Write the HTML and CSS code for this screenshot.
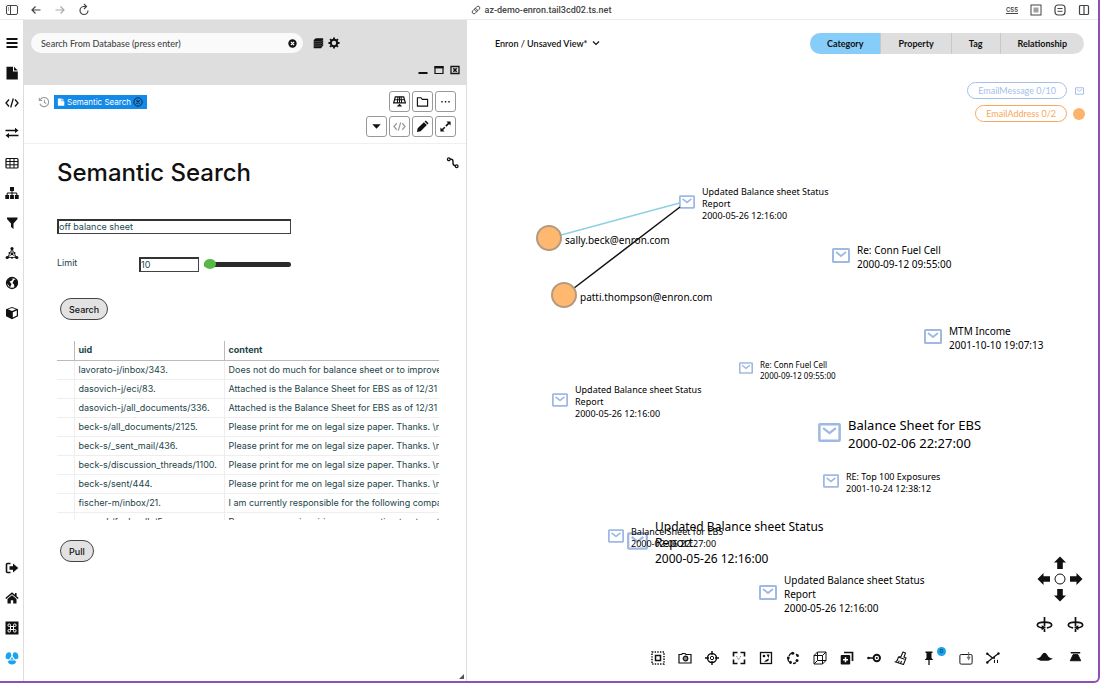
FILE: index.html
```html
<!DOCTYPE html>
<html lang="en">
<head>
    <meta charset="UTF-8">
    <meta name="viewport" content="width=device-width, initial-scale=1.0">
    <title>Semantic Search</title>
    <link rel="stylesheet" href="styles.css">
</head>
<body>

<!-- shared icons -->
<svg class="sprite" aria-hidden="true">
    <symbol id="mail" viewBox="0 0 18 15">
        <rect x="1" y="1" width="16" height="13" rx="0.5" fill="#fff" stroke="currentColor" stroke-width="2"/>
        <path d="M4 4l5 4 5-4" fill="none" stroke="currentColor" stroke-width="1.800"/>
    </symbol>
    <symbol id="code" viewBox="0 0 14 14">
        <path d="M4 3.500L1 7l3 3.500M10 3.500L13 7l-3 3.500M8.300 2.500L5.700 11.500" fill="none" stroke="currentColor" stroke-width="1.300"/>
    </symbol>
    <symbol id="file" viewBox="0 0 14 14">
        <path d="M1.500.8h6.500v4.700h4.800V13.500H1.500z" fill="currentColor"/>
        <path d="M9 .8l3.800 3.700H9z" fill="currentColor"/>
    </symbol>
    <symbol id="arrow" viewBox="0 0 14 14">
        <path d="M7 .5L13 6.500H9.800V13H4.200V6.500H1z" fill="currentColor"/>
    </symbol>
    <symbol id="rotate" viewBox="0 0 18 18">
        <path d="M9 1v10M9 13.500v3.500" stroke="currentColor" stroke-width="1.800"/>
        <path d="M6.500 12.500C-.8 11.800-.5 6.500 9 6.500s9.800 5.300 2.500 6" fill="none" stroke="currentColor" stroke-width="1.800"/>
        <path d="M6 9.700l4.500 2.600-4.500 2.700z" fill="currentColor"/>
    </symbol>
</svg>

<header class="browser-bar">
    <div class="bar-group">
        <button class="bar-btn" aria-label="Sidebar"><svg viewBox="0 0 14 14"><rect x="1.500" y="2.500" width="11" height="9" rx="1.500" fill="none" stroke="currentColor"/><path d="M5.500 2.500v9M3 5h1M3 7h1" stroke="currentColor"/></svg></button>
        <button class="bar-btn" aria-label="Back"><svg viewBox="0 0 14 14"><path d="M11.500 7H3M6.500 3.500L3 7l3.500 3.500" fill="none" stroke="currentColor" stroke-width="1.200"/></svg></button>
        <button class="bar-btn faded" aria-label="Forward"><svg viewBox="0 0 14 14"><path d="M2.500 7H11M7.500 3.500L11 7l-3.500 3.500" fill="none" stroke="currentColor" stroke-width="1.200"/></svg></button>
        <button class="bar-btn" aria-label="Reload"><svg viewBox="0 0 14 14"><path d="M11 7.500a4 4 0 1 1-4-4h2M7 1l2.500 2.500L7 6" fill="none" stroke="currentColor" stroke-width="1.200"/></svg></button>
    </div>
    <div class="url">
        <svg viewBox="0 0 14 14"><g fill="none" stroke="currentColor" stroke-width="1.200" transform="rotate(-45 7 7)"><rect x="0.500" y="4.500" width="8" height="5" rx="2.500"/><rect x="5.500" y="4.500" width="8" height="5" rx="2.500"/></g></svg>
        az-demo-enron.tail3cd02.ts.net
    </div>
    <div class="bar-group bar-right">
        <button class="bar-btn css-btn">CSS</button>
        <button class="bar-btn" aria-label="Reader"><svg viewBox="0 0 14 14"><rect x="2" y="2" width="10" height="10" fill="none" stroke="currentColor"/><rect x="4.500" y="4.500" width="5" height="5" fill="currentColor" opacity=".5"/></svg></button>
        <button class="bar-btn" aria-label="Page menu"><svg viewBox="0 0 14 14"><rect x="2" y="2" width="10" height="10" rx="3" fill="none" stroke="currentColor" stroke-width="1.200"/><path d="M4.500 5.500h5M4.500 8.300h5" stroke="currentColor"/></svg></button>
        <button class="bar-btn" aria-label="Split view"><svg viewBox="0 0 14 14"><rect x="2.500" y="2.500" width="9" height="9" rx="1" fill="none" stroke="currentColor" stroke-width="1.200"/><path d="M7 2v10" stroke="currentColor" stroke-width="1.200"/></svg></button>
    </div>
</header>

<div class="app">
    <nav class="rail">
        <button aria-label="Menu"><svg viewBox="0 0 14 14"><path d="M1.500 3h11M1.500 7h11M1.500 11h11" stroke="currentColor" stroke-width="2"/></svg></button>
        <button aria-label="Document"><svg><use href="#file"/></svg></button>
        <button aria-label="Code"><svg><use href="#code"/></svg></button>
        <button aria-label="Exchange"><svg viewBox="0 0 14 14"><path d="M.5 4.500H11M3 9.500h10.500" stroke="currentColor" stroke-width="1.600"/><path d="M10 1.800L13.500 4.500 10 7zM4 7L.5 9.500 4 12.200z" fill="currentColor"/></svg></button>
        <button aria-label="Table"><svg viewBox="0 0 14 14"><rect x="1" y="2.500" width="12" height="9.500" rx="1" fill="none" stroke="currentColor" stroke-width="1.200"/><path d="M1 5.500h12M1 8.800h12M5 2.500V12M9 2.500V12" stroke="currentColor"/></svg></button>
        <button aria-label="Hierarchy"><svg viewBox="0 0 14 14"><path d="M5 1h4v4H5zM.3 9h3.800v4H.3zM5.100 9h3.800v4H5.100zM9.900 9h3.800v4H9.900z" fill="currentColor"/><path d="M7 4v5M2.200 9V7h9.600v2" fill="none" stroke="currentColor"/></svg></button>
        <button aria-label="Filter"><svg viewBox="0 0 14 14"><path d="M2 1.500h10.500v1.500L8.500 7.500V13L6 11V7.500L2 3z" fill="currentColor"/></svg></button>
        <button aria-label="Network"><svg viewBox="0 0 14 14"><path d="M7 3L2.500 11.500h9zM7 3v5l-4.500 3.500M7 8l4.500 3.500" fill="none" stroke="currentColor" stroke-width=".8"/><g fill="currentColor"><circle cx="7" cy="2.500" r="1.600"/><circle cx="2.200" cy="11.500" r="1.600"/><circle cx="11.800" cy="11.500" r="1.600"/><circle cx="7" cy="8" r="1.200"/><circle cx="7" cy="11.800" r="1"/><circle cx="4.500" cy="7" r="1"/><circle cx="9.500" cy="7" r="1"/></g></svg></button>
        <button aria-label="Globe"><svg viewBox="0 0 14 14"><circle cx="7" cy="7" r="5.500" fill="#fff" stroke="currentColor" stroke-width="1.300"/><path d="M2 4.500L5 2l3 .5-1 2-2.500 1L6.500 8 5 11.500 3.500 9 1.500 7zM9 4l3-1 1 4-1.500 3.500L9.500 12l-.5-3.500L7.500 7z" fill="currentColor"/></svg></button>
        <button aria-label="Cube"><svg viewBox="0 0 14 14"><path d="M7 1l6 2.200v7L7 13.200l-6-3v-7z" fill="currentColor"/><path d="M7.800 6.300l4-1.700v5l-4 2zM3 3.300l4-1.200 4 1.200L7 5z" fill="#fff"/></svg></button>
        <div class="rail-space"></div>
        <button aria-label="Sign out"><svg viewBox="0 0 14 14"><path d="M5.500 2.500H2.500a1 1 0 0 0-1 1v7a1 1 0 0 0 1 1h3" fill="none" stroke="currentColor" stroke-width="1.600"/><path d="M4.500 5.300H8V2.500L13.300 7 8 11.500V8.700H4.500z" fill="currentColor"/></svg></button>
        <button aria-label="Home"><svg viewBox="0 0 14 14"><path d="M.8 7.500L7 2.200l6.200 5.300M10.800 2v3.500" fill="none" stroke="currentColor" stroke-width="1.600"/><path d="M2.500 8L7 4.300 11.500 8v4.500h-3.300V9.200H5.800v3.300H2.500z" fill="currentColor"/></svg></button>
        <button aria-label="Commands"><svg viewBox="0 0 14 14"><path d="M.5.500h13v13H.5z" fill="currentColor"/><path d="M5.500 5.500h3v3h-3zM5.500 5.500H4.300a1.300 1.300 0 1 1 1.200-1.200zM8.500 5.500V4.300a1.300 1.300 0 1 1 1.200 1.200zM8.500 8.500h1.200a1.300 1.300 0 1 1-1.200 1.200zM5.500 8.500v1.200a1.300 1.300 0 1 1-1.200-1.200z" fill="none" stroke="#fff"/></svg></button>
        <button class="brand" aria-label="About"><svg viewBox="0 0 14 14"><g fill="currentColor"><path d="M1.500 2.500Q4 .5 5.800 2L6.500 5 4 8.500.8 7.500Q0 5 1.500 2.500z"/><path d="M12.500 2.500Q10 .5 8.200 2L7.500 5 10 8.500l3.200-1Q14 5 12.500 2.500z"/><path d="M2.800 10.800L4.800 9h4.400l2 1.800q-1 2.700-4.200 2.700t-4.200-2.700z"/></g><path d="M7 5.200L4.800 9h4.400z" fill="currentColor" stroke="#fff" stroke-width=".8"/></svg></button>
    </nav>

    <main class="panel">
        <div class="panel-head">
            <div class="search-row">
                <div class="search-box">
                    <input type="text" aria-label="Search from database" placeholder="Search From Database (press enter)">
                    <button aria-label="Clear"><svg viewBox="0 0 14 14"><circle cx="7" cy="7" r="6.500" fill="currentColor"/><path d="M4.500 4.500l5 5M9.500 4.500l-5 5" stroke="#fff" stroke-width="2"/></svg></button>
                </div>
                <button aria-label="Database"><svg viewBox="0 0 14 14"><path d="M2 3.500L4.500 1.500H13V10l-2.500 3H2z" fill="currentColor"/><path d="M2 5.500h8.500L13 3.500M2 8h8.500L13 6M2 10.500h8.500L13 8.500" fill="none" stroke="#888" stroke-width=".6"/></svg></button>
                <button aria-label="Settings"><svg viewBox="0 0 14 14"><circle cx="7" cy="7" r="3.700" fill="none" stroke="currentColor" stroke-width="2.300"/><path d="M7 .5v2.500M7 11v2.500M.5 7H3M11 7h2.500M2.400 2.400l1.800 1.800M9.800 9.800l1.800 1.800M2.400 11.600l1.800-1.800M9.800 4.200l1.800-1.800" stroke="currentColor" stroke-width="2.200"/></svg></button>
            </div>
            <div class="window-row">
                <button aria-label="Minimize"><svg viewBox="0 0 10 10"><path d="M.5 8h9" stroke="currentColor" stroke-width="2"/></svg></button>
                <button aria-label="Maximize"><svg viewBox="0 0 10 10"><path d="M1 1.500h8v7H1z" fill="none" stroke="currentColor" stroke-width="1.200"/><path d="M.5 2.300h9" stroke="currentColor" stroke-width="2.200"/></svg></button>
                <button aria-label="Close"><svg viewBox="0 0 10 10"><path d="M1 1.500h8v7H1z" fill="none" stroke="currentColor" stroke-width="1.300"/><path d="M3.300 3.300l3.400 3.400M6.700 3.300L3.300 6.700" stroke="currentColor" stroke-width="1.500"/></svg></button>
            </div>
        </div>

        <div class="panel-tools">
            <div class="tabs">
                <button class="history" aria-label="History"><svg viewBox="0 0 14 14"><path d="M2.500 4.500a5.300 5.300 0 1 1-.3 4.500M1.500 2v3.200h3.300M7.500 4.500V7.500l2 1.300" fill="none" stroke="currentColor" stroke-width="1.200"/></svg></button>
                <div class="tab">
                    <svg><use href="#file"/></svg>
                    <span>Semantic Search</span>
                    <button aria-label="Close tab"><svg viewBox="0 0 14 14"><circle cx="7" cy="7" r="5.800" fill="none" stroke="currentColor" stroke-width="1.300"/><path d="M4.800 4.800l4.400 4.400M9.200 4.800L4.800 9.200" stroke="currentColor" stroke-width="1.600"/></svg></button>
                </div>
            </div>
            <div class="tool-grid">
                <span></span>
                <button aria-label="Grid"><svg viewBox="0 0 14 14"><path d="M2.500 2h9l1.800 6.500H.7z" fill="none" stroke="currentColor" stroke-width="1.300"/><path d="M1.500 5.200h11M5.300 2L4.700 8.500M8.700 2l.6 6.500M7 2v6.500" stroke="currentColor" stroke-width="1.100"/><path d="M7 9.500l3 3H4z" fill="currentColor"/></svg></button>
                <button aria-label="Folder"><svg viewBox="0 0 14 14"><path d="M1.500 3h4l1.300 1.700h5.700V12h-11z" fill="none" stroke="currentColor" stroke-width="1.200" stroke-linejoin="round"/></svg></button>
                <button aria-label="More"><svg viewBox="0 0 14 14"><path d="M2.500 6.500H4V8H2.500zM6.300 6.500h1.500V8H6.300zM10 6.500h1.500V8H10z" fill="currentColor"/></svg></button>
                <button aria-label="Dropdown"><svg viewBox="0 0 14 14"><path d="M2.500 4.500h9L7 9.500z" fill="currentColor"/></svg></button>
                <button class="off" aria-label="Edit code"><svg><use href="#code"/></svg></button>
                <button aria-label="Edit"><svg viewBox="0 0 14 14"><path d="M1 13l.8-4L8.500 2.300l3.200 3.200L5 12.200zM9.200 1.600L10.500.5l3 3-1.100 1.300z" fill="currentColor"/></svg></button>
                <button aria-label="Expand"><svg viewBox="0 0 14 14"><path d="M3 11l8-8" stroke="currentColor" stroke-width="1.700" stroke-dasharray="4.600 1.600"/><path d="M8 1.500h4.500V6zM1.500 8v4.500H6z" fill="currentColor"/></svg></button>
            </div>
        </div>

        <div class="panel-body">
            <button class="route" aria-label="Route"><svg viewBox="0 0 14 14"><path d="M3.500 3.500h2q2 0 2 2v2q0 3 3 3h1" fill="none" stroke="currentColor" stroke-width="1.500"/><circle cx="3" cy="3.500" r="1.500" fill="#fff" stroke="currentColor" stroke-width="1.300"/><circle cx="11.500" cy="11" r="1.500" fill="#fff" stroke="currentColor" stroke-width="1.300"/></svg></button>
            <h1>Semantic Search</h1>
            <form class="query">
                <input class="field" type="text" aria-label="Query" value="off balance sheet">
                <div class="limit">
                    <label for="limit">Limit</label>
                    <input class="field" id="limit" type="text" value="10">
                    <input type="range" aria-label="Limit slider" min="0" max="200" value="1">
                </div>
                <button class="pill-btn" type="button">Search</button>
            </form>
            <div class="results">
                <table>
                    <thead>
                        <tr><th></th><th>uid</th><th>content</th></tr>
                    </thead>
                    <tbody>
                        <tr><td></td><td>lavorato-j/inbox/343.</td><td>Does not do much for balance sheet or to improve</td></tr>
                        <tr><td></td><td>dasovich-j/eci/83.</td><td>Attached is the Balance Sheet for EBS as of 12/31</td></tr>
                        <tr><td></td><td>dasovich-j/all_documents/336.</td><td>Attached is the Balance Sheet for EBS as of 12/31</td></tr>
                        <tr><td></td><td>beck-s/all_documents/2125.</td><td>Please print for me on legal size paper. Thanks. \n-</td></tr>
                        <tr><td></td><td>beck-s/_sent_mail/436.</td><td>Please print for me on legal size paper. Thanks. \n-</td></tr>
                        <tr><td></td><td>beck-s/discussion_threads/1100.</td><td>Please print for me on legal size paper. Thanks. \n-</td></tr>
                        <tr><td></td><td>beck-s/sent/444.</td><td>Please print for me on legal size paper. Thanks. \n-</td></tr>
                        <tr><td></td><td>fischer-m/inbox/21.</td><td>I am currently responsible for the following compa</td></tr>
                        <tr><td></td><td>mann-k/fuel_cells/5.</td><td>Response re my inquiries re accounting treatment</td></tr>
                    </tbody>
                </table>
            </div>
            <button class="pill-btn" type="button">Pull</button>
        </div>
        <div class="resize"></div>
    </main>

    <section class="graph">
        <div class="graph-head">
            <button class="view-name">Enron / Unsaved View* <svg viewBox="0 0 10 10"><path d="M2 3.500l3 3 3-3" fill="none" stroke="currentColor" stroke-width="1.200"/></svg></button>
            <div class="segments">
                <button class="active">Category</button>
                <button>Property</button>
                <button>Tag</button>
                <button>Relationship</button>
            </div>
        </div>

        <div class="legend">
            <div class="legend-row message"><button>EmailMessage 0/10</button><svg><use href="#mail"/></svg></div>
            <div class="legend-row address"><button>EmailAddress 0/2</button><span class="dot"></span></div>
        </div>

        <svg class="edges" aria-hidden="true">
            <line x1="83" y1="218" x2="220" y2="181" stroke="#8ed0e4" stroke-width="1.500"/>
        </svg>
        <div class="node mail-node size-s n1"><svg><use href="#mail"/></svg><p>Updated Balance sheet Status<br>Report<br>2000-05-26 12:16:00</p></div>
        <div class="node mail-node size-m n2"><svg><use href="#mail"/></svg><p>Re: Conn Fuel Cell<br>2000-09-12 09:55:00</p></div>
        <div class="node mail-node size-m n3"><svg><use href="#mail"/></svg><p>MTM Income<br>2001-10-10 19:07:13</p></div>
        <div class="node mail-node size-xs n4"><svg><use href="#mail"/></svg><p>Re: Conn Fuel Cell<br>2000-09-12 09:55:00</p></div>
        <div class="node mail-node size-s n5"><svg><use href="#mail"/></svg><p>Updated Balance sheet Status<br>Report<br>2000-05-26 12:16:00</p></div>
        <div class="node mail-node size-xl n6"><svg><use href="#mail"/></svg><p>Balance Sheet for EBS<br>2000-02-06 22:27:00</p></div>
        <div class="node mail-node size-s n7"><svg><use href="#mail"/></svg><p>RE: Top 100 Exposures<br>2001-10-24 12:38:12</p></div>
        <div class="node mail-node size-l n9"><svg><use href="#mail"/></svg><p>Updated Balance sheet Status<br>Report<br>2000-05-26 12:16:00</p></div>
        <div class="node mail-node size-s n8"><svg><use href="#mail"/></svg><p>Balance Sheet for EBS<br>2000-02-06 22:27:00</p></div>
        <div class="node mail-node size-m n10"><svg><use href="#mail"/></svg><p>Updated Balance sheet Status<br>Report<br>2000-05-26 12:16:00</p></div>
        <div class="node address-node size-m n11"><span></span><p>sally.beck@enron.com</p></div>
        <svg class="edges" aria-hidden="true">
            <line x1="98" y1="275" x2="213" y2="187" stroke="#111" stroke-width="1.500"/>
        </svg>
        <div class="node address-node size-m n12"><span></span><p>patti.thompson@enron.com</p></div>

        <div class="graph-tools">
            <button aria-label="Select all"><svg viewBox="0 0 14 14"><rect x="1" y="1" width="12" height="12" fill="none" stroke="currentColor" stroke-width="1.500" stroke-dasharray="1.400 1.250"/><rect x="4.500" y="4.500" width="5" height="5" fill="none" stroke="currentColor" stroke-width="1.500"/></svg></button>
            <button aria-label="Screenshot"><svg viewBox="0 0 14 14"><path d="M1 3.500h2.500L4.500 2.500h2.500l1 1H13v8.500H1z" fill="none" stroke="currentColor" stroke-width="1.200"/><circle cx="7.500" cy="7.500" r="2.300" fill="#888" stroke="currentColor" stroke-width="1.200"/></svg></button>
            <button aria-label="Center"><svg viewBox="0 0 14 14"><circle cx="7" cy="7" r="4.500" fill="none" stroke="currentColor" stroke-width="1.400"/><circle cx="7" cy="7" r="1.700" fill="none" stroke="currentColor"/><path d="M7 0v4M7 10v4M0 7h4M10 7h4" stroke="currentColor" stroke-width="1.400"/></svg></button>
            <button aria-label="Fit view"><svg viewBox="0 0 14 14"><path d="M1.500 5.500v-4h4M8.500 1.500h4v4M12.500 8.500v4h-4M5.500 12.500h-4v-4" fill="none" stroke="currentColor" stroke-width="1.600"/><path d="M4.500 5l2 4 2.500-4.500" fill="none" stroke="#888" stroke-dasharray="1.500 1"/></svg></button>
            <button aria-label="Fit selection"><svg viewBox="0 0 14 14"><rect x="1.500" y="1.500" width="11" height="11" fill="none" stroke="currentColor" stroke-width="1.300"/><circle cx="5" cy="5" r="1.300" fill="currentColor"/><path d="M7.500 3.500h3L9.500 7zM9.500 7.500q1.500 3-4.500 3.500 1-2 4.500-3.500z" fill="currentColor"/></svg></button>
            <button aria-label="Layout"><svg viewBox="0 0 14 14"><path d="M3 5q1-2.500 3-3M10 3q2 1 2 3M10 11.500q-1 1-3 1M2 8q0 2 1.500 3" fill="none" stroke="currentColor" stroke-width="1.300"/><g fill="currentColor"><circle cx="2.300" cy="7" r="1.400"/><circle cx="6.800" cy="2.300" r="1.500"/><circle cx="11.500" cy="4.500" r="1.300"/><circle cx="11" cy="9.500" r="1.500"/><circle cx="4.500" cy="11.500" r="1.400"/></g></svg></button>
            <button aria-label="3D"><svg viewBox="0 0 14 14"><path d="M1 4.500h8.500V13H1zM4.500 1H13v8.500H4.500zM1 4.500L4.500 1M9.500 4.500L13 1M9.500 13L13 9.500M1 13l3.500-3.500" fill="none" stroke="currentColor"/></svg></button>
            <button aria-label="Duplicate"><svg viewBox="0 0 14 14"><path d="M4 1.500h8.500V10" fill="none" stroke="currentColor" stroke-width="1.700"/><rect x=".7" y="4" width="9.500" height="9.500" rx="1" fill="currentColor"/><path d="M5.500 6.200v5M3 8.700h5" stroke="#fff" stroke-width="1.500"/></svg></button>
            <button aria-label="Connect"><svg viewBox="0 0 14 14"><path d="M1 7h6" stroke="currentColor" stroke-width="1.500"/><circle cx="1.500" cy="7" r="1.300" fill="currentColor"/><circle cx="9.800" cy="7" r="3.200" fill="none" stroke="currentColor" stroke-width="1.900"/><circle cx="9.800" cy="7" r="1" fill="currentColor"/></svg></button>
            <button aria-label="Clean"><svg viewBox="0 0 14 14"><path d="M9 1l2.500 1-1.500 4 2 1-2.500 6.500L1.500 11q2-1 3-5l2.500-.5zM4.500 6l6 2.300M4 12l1.300-2.300M6.500 12.500L7.600 10" fill="none" stroke="currentColor" stroke-width="1.100"/></svg></button>
            <button class="pin" aria-label="Pinned"><svg viewBox="0 0 14 14"><path d="M3.500.5h7V2h-1v5l1.800 2H2.700l1.800-2V2h-1z" fill="currentColor"/><path d="M7 9v5" stroke="currentColor" stroke-width="1.300"/></svg><span>0</span></button>
            <button aria-label="Import"><svg viewBox="0 0 16 16"><rect x="1" y="4" width="14" height="11" rx="1.500" fill="none" stroke="currentColor" stroke-width="1.100"/><path d="M11 1v9M9.300 6.500l1.700 3 1.700-3" fill="none" stroke="#777" stroke-width="1.300"/></svg></button>
            <button aria-label="Split"><svg viewBox="0 0 14 14"><path d="M1 2.500l5.500 4.500L1 11.500M6.500 7l6-4.500M6 7h3" fill="none" stroke="currentColor" stroke-width="1.300"/><circle cx="1.300" cy="2.800" r="1.200" fill="currentColor"/><circle cx="1.300" cy="11.500" r="1.200" fill="currentColor"/><circle cx="12.500" cy="2.500" r="1.200" fill="currentColor"/><path d="M8.500 8.800v3.200M11.500 8.800v3.200" stroke="currentColor"/></svg></button>
        </div>

        <div class="camera">
            <div class="pad">
                <button class="up" aria-label="Up"><svg><use href="#arrow"/></svg></button>
                <button class="left" aria-label="Left"><svg><use href="#arrow"/></svg></button>
                <button class="home" aria-label="Reset"><svg viewBox="0 0 14 14"><circle cx="7" cy="7" r="5" fill="none" stroke="currentColor"/></svg></button>
                <button class="right" aria-label="Right"><svg><use href="#arrow"/></svg></button>
                <button class="down" aria-label="Down"><svg><use href="#arrow"/></svg></button>
            </div>
            <div class="pair">
                <button aria-label="Rotate left"><svg><use href="#rotate"/></svg></button>
                <button class="flip" aria-label="Rotate right"><svg><use href="#rotate"/></svg></button>
            </div>
            <div class="pair">
                <button aria-label="Tilt down"><svg viewBox="0 0 18 18"><path d="M0 11.500q4.500-.5 6-4Q9 2.500 12 7.500q1.500 3.500 6 4l-5 2H5z" fill="currentColor"/></svg></button>
                <button aria-label="Tilt up"><svg viewBox="0 0 18 18"><path d="M4 5h10" stroke="currentColor" stroke-width="1.500"/><path d="M3.500 13.500L6.500 7h5l3 6.500z" fill="currentColor" stroke="currentColor"/></svg></button>
            </div>
        </div>
    </section>
</div>

</body>
</html>
```
FILE: styles.css
```css
* {
    box-sizing: border-box;
}
body {
    margin: 0;
    min-height: 100vh;
    display: flex;
    flex-direction: column;
    background-color: #fff;
    border-right: 2px solid #8f4fb8;
    border-bottom: 2px solid #8f4fb8;
    border-bottom-right-radius: 6px;
    font-family: Inter, sans-serif;
    font-size: 9px;
    color: #111;
}
button {
    display: flex;
    align-items: center;
    justify-content: center;
    margin: 0;
    padding: 0;
    border: none;
    background: none;
    color: inherit;
    font: inherit;
    cursor: pointer;
}
svg {
    display: block;
    flex: none;
    width: 14px;
    height: 14px;
}
.sprite {
    position: absolute;
    width: 0;
    height: 0;
}

/* browser bar */
.browser-bar {
    display: grid;
    grid-template-columns: 1fr auto 1fr;
    align-items: center;
    height: 20px;
    border-bottom: 1px solid #ececec;
    color: #444;
}
.bar-group {
    display: flex;
}
.bar-right {
    justify-content: flex-end;
    padding-right: 2px;
}
.bar-btn {
    width: 24px;
    height: 18px;
}
.faded {
    color: #aaa;
}
.css-btn {
    font-size: 6px;
    font-weight: 600;
    text-decoration: underline;
}
.url {
    display: flex;
    align-items: center;
    gap: 4px;
    padding-right: 16px;
    font-family: Roboto, sans-serif;
    font-weight: 500;
}
.url svg {
    width: 10px;
    height: 10px;
}

.app {
    flex: 1;
    display: flex;
}

/* left rail */
.rail {
    width: 24px;
    display: flex;
    flex-direction: column;
    padding: 8px 0;
    border-right: 1px solid #ddd;
}
.rail button {
    height: 30px;
}
.rail-space {
    flex: 1;
}
.brand {
    color: #1ba4ee;
}

/* search panel */
.panel {
    position: relative;
    flex: 0 0 443px;
    min-width: 0;
    border-right: 1px solid #ddd;
}
.panel-head {
    height: 65px;
    padding: 13px 6px 0 7px;
    background-color: #dedede;
}
.search-row {
    display: flex;
    align-items: center;
    gap: 4px;
}
.search-row > button svg {
    width: 12px;
    height: 12px;
}
.search-box {
    display: flex;
    align-items: center;
    width: 272px;
    height: 20px;
    margin-right: 5px;
    padding: 0 6px 0 10px;
    border-radius: 10px;
    background-color: #fafafa;
}
.search-box input {
    flex: 1;
    padding: 0;
    border: none;
    outline: none;
    background: none;
    font-family: Lato, sans-serif;
    font-size: 9px;
    font-weight: 500;
    color: #444;
}
.search-box input::placeholder {
    color: #444;
}
.search-box svg {
    width: 9px;
    height: 9px;
}
.window-row {
    display: flex;
    justify-content: flex-end;
    gap: 6px;
    padding-top: 12px;
}
.window-row svg {
    width: 10px;
    height: 10px;
}
.panel-tools {
    display: flex;
    justify-content: space-between;
    align-items: flex-start;
    height: 59px;
    padding: 6px 10px 0 14px;
    border-bottom: 1px solid #f0f0f0;
}
.tabs {
    display: flex;
    align-items: center;
    gap: 4px;
    padding-top: 4px;
}
.history {
    color: #999;
}
.history svg {
    width: 12px;
    height: 12px;
}
.tab {
    display: flex;
    align-items: center;
    gap: 2px;
    height: 14px;
    padding: 0 4px 0 3px;
    background-color: #1389e8;
    font-size: 8px;
    color: #fff;
}
.tab svg {
    width: 8px;
    height: 8px;
}
.tab button {
    color: #123;
}
.tab button svg {
    width: 10px;
    height: 10px;
}
.tool-grid {
    display: grid;
    grid-template-columns: repeat(4, 21px);
    gap: 4px 2px;
}
.tool-grid button {
    height: 21px;
    border: 1px solid #999;
    border-radius: 3px;
}
.tool-grid svg {
    width: 13px;
    height: 13px;
}
.tool-grid .off {
    color: #999;
}
.panel-body {
    position: relative;
    padding: 13px 27px 0 33px;
    color: #1c4448;
}
.route {
    position: absolute;
    top: 12px;
    right: 7px;
    color: #111;
}
.route svg {
    width: 13px;
    height: 13px;
}
h1 {
    margin: 0;
    font-size: 24px;
    font-weight: 500;
    line-height: 32px;
    color: #111;
}
.query {
    width: 234px;
    padding-top: 30px;
}
.field {
    display: block;
    width: 100%;
    height: 15px;
    margin: 0;
    padding: 0 0 2px;
    border: 1px solid #444;
    border-top: 2px solid #333;
    border-left: 2px solid #333;
    font: inherit;
    color: #1c4a50;
}
.limit {
    display: grid;
    grid-template-columns: 77px 60px 87px;
    column-gap: 5px;
    align-items: center;
    padding: 23px 0 26px;
}
.limit label {
    align-self: start;
}
.limit input[type="range"] {
    appearance: none;
    width: 87px;
    height: 12px;
    margin: 0;
    background: none;
}
.limit input[type="range"]::-webkit-slider-runnable-track {
    height: 5px;
    border-radius: 3px;
    background-color: #2b2b2b;
}
.limit input[type="range"]::-webkit-slider-thumb {
    appearance: none;
    width: 12px;
    height: 10px;
    margin-top: -3px;
    border-radius: 50%;
    background-color: #55b944;
}
.pill-btn {
    height: 22px;
    margin-left: 3px;
    padding: 0 8px;
    border: 1px solid #444;
    border-radius: 11px;
    background-color: #e2e2e2;
    font-weight: 500;
    color: #111;
}
.results {
    height: 179px;
    margin: 21px 0 20px;
    overflow: hidden;
}
table {
    width: 100%;
    table-layout: fixed;
    border-collapse: collapse;
}
th, td {
    height: 19px;
    padding: 0 4px;
    border-bottom: 1px solid #eee;
    border-left: 1px solid #eee;
    line-height: 14px;
    text-align: left;
    white-space: nowrap;
    overflow: hidden;
}
th:last-child, td:last-child {
    padding-right: 0;
}
th {
    border-left-color: #bbb;
    border-bottom-color: #bbb;
}
th:first-child, td:first-child {
    width: 17px;
    border-left: none;
}
th:nth-child(2) {
    width: 150px;
}
.resize {
    position: absolute;
    right: 2px;
    bottom: 2px;
    border-left: 5px solid transparent;
    border-bottom: 5px solid #555;
}

/* graph */
.graph {
    position: relative;
    flex: 1;
    min-width: 0;
    font-family: "Noto Sans", sans-serif;
}
.graph-head {
    display: flex;
    justify-content: space-between;
    padding: 13px 14px 0 28px;
    font-family: Lato, sans-serif;
    font-size: 9px;
}
.view-name {
    gap: 4px;
    height: 20px;
    font-weight: 600;
}
.view-name svg {
    width: 10px;
    height: 10px;
}
.segments {
    display: flex;
    height: 21px;
    border-radius: 11px;
    overflow: hidden;
    background-color: #dedede;
}
.segments button {
    padding: 0 17px;
    border-left: 1px solid #c8c8c8;
    font-weight: 700;
}
.segments .active {
    border-left: none;
    background-color: #86cdfa;
}
.legend {
    display: flex;
    flex-direction: column;
    align-items: flex-end;
    gap: 6px;
    padding: 28px 13px 0 0;
    font-family: Lato, sans-serif;
    font-size: 9px;
}
.legend-row {
    display: grid;
    grid-template-columns: auto 12px;
    gap: 6px;
    align-items: center;
    justify-items: center;
}
.legend-row button {
    height: 17px;
    padding: 0 10px;
    border: 1px solid currentColor;
    border-radius: 9px;
}
.legend-row svg {
    width: 9px;
    height: 8px;
}
.message {
    color: #a6bfe8;
}
.address {
    color: #f9a75a;
}
.dot {
    width: 12px;
    height: 12px;
    border-radius: 50%;
    background-color: #fdb36c;
}

/* nodes sit on a free canvas */
.edges {
    position: absolute;
    top: 0;
    left: 0;
    width: 100%;
    height: 100%;
    pointer-events: none;
}
.node {
    position: absolute;
    display: flex;
    align-items: center;
    white-space: nowrap;
}
.node p {
    margin: 0;
    color: #000;
}
.mail-node {
    gap: 7px;
    color: #9fb9e2;
}
.mail-node svg {
    margin-bottom: 4px;
}
.address-node {
    gap: 3px;
}
.address-node span {
    width: 26px;
    height: 26px;
    border: 2px solid #b59a80;
    border-radius: 50%;
    background-color: #ffb870;
}
.address-node p {
    margin-top: 4px;
}
.size-xs {
    font-size: 8px;
    line-height: 11px;
}
.size-xs svg {
    width: 14px;
    height: 12px;
}
.size-s {
    font-size: 9px;
    line-height: 12px;
}
.size-s svg {
    width: 16px;
    height: 14px;
}
.size-m {
    font-size: 10px;
    line-height: 14px;
}
.size-m svg {
    width: 18px;
    height: 15px;
}
.size-l {
    font-size: 12px;
    line-height: 16px;
}
.size-l svg {
    width: 21px;
    height: 18px;
}
.size-xl {
    font-size: 13px;
    line-height: 18px;
}
.size-xl svg {
    width: 23px;
    height: 19px;
}
.n1 { left: 212px; top: 166px; }
.n2 { left: 365px; top: 223px; }
.n3 { left: 457px; top: 304px; }
.n4 { left: 272px; top: 339px; }
.n5 { left: 85px; top: 364px; }
.n6 { left: 351px; top: 396px; }
.n7 { left: 356px; top: 451px; }
.n8 { left: 141px; top: 506px; }
.n9 { left: 160px; top: 499px; }
.n10 { left: 292px; top: 553px; }
.n11 { left: 69px; top: 205px; }
.n12 { left: 84px; top: 262px; }

/* overlay controls */
.graph-tools {
    position: absolute;
    right: 92px;
    bottom: 12px;
    display: flex;
}
.graph-tools button {
    width: 27px;
    height: 22px;
}
.graph-tools .pin {
    position: relative;
    width: 38px;
    padding-right: 9px;
}
.pin span {
    position: absolute;
    top: 0;
    right: 6px;
    width: 9px;
    height: 9px;
    border-radius: 50%;
    background-color: #1ba4ee;
    font-size: 6px;
    line-height: 9px;
}
.camera {
    position: absolute;
    right: 12px;
    bottom: 14px;
    display: flex;
    flex-direction: column;
    align-items: center;
    gap: 11px;
}
.pad {
    display: grid;
    grid-template-areas: ". up ." "left home right" ". down .";
    grid-template-columns: repeat(3, 16px);
    grid-template-rows: repeat(3, 16px);
}
.up { grid-area: up; }
.left { grid-area: left; transform: rotate(-90deg); }
.home { grid-area: home; }
.right { grid-area: right; transform: rotate(90deg); }
.down { grid-area: down; transform: rotate(180deg); }
.pair {
    display: flex;
    gap: 10px;
}
.pair button {
    width: 21px;
    height: 21px;
}
.pair svg {
    width: 17px;
    height: 17px;
}
.flip {
    transform: scaleX(-1);
}
```
